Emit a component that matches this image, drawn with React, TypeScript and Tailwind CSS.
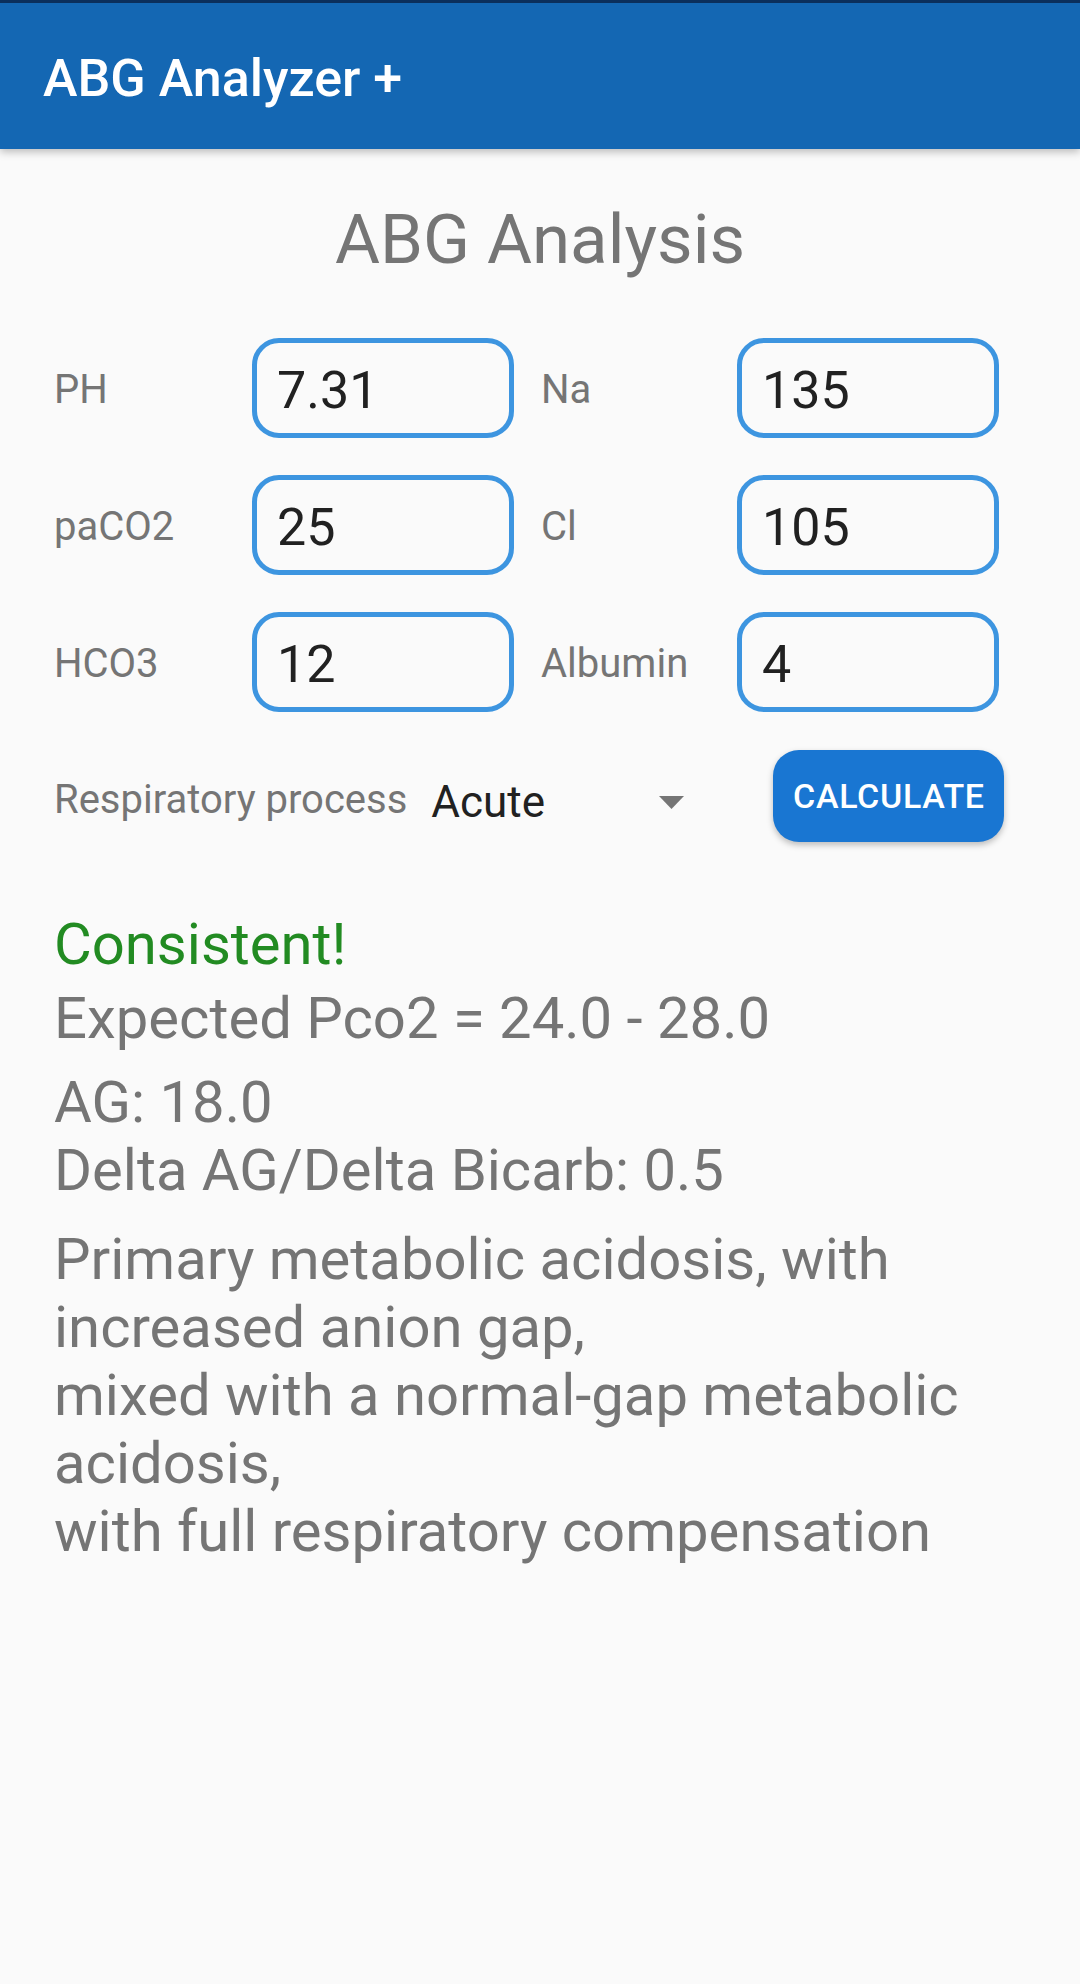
import { useState } from 'react'

const rows: [string, string, string, string][] = [
  ['PH', '7.31', 'Na', '135'],
  ['paCO2', '25', 'Cl', '105'],
  ['HCO3', '12', 'Albumin', '4'],
]

function Field({ value }: { value: string }) {
  const [val, setVal] = useState(value)
  return (
    <input
      value={val}
      onChange={(e) => setVal(e.target.value)}
      className="h-[100px] w-full rounded-[27px] border-[5px] border-[#3d95e0] bg-transparent pl-[20px] pt-[4px] text-[52px] text-[#212121] outline-none"
    />
  )
}

export default function App() {
  return (
    <div className="min-h-[1984px] w-[1080px] bg-[#fafafa] font-['Roboto','Liberation_Sans',sans-serif]">
      <header className="relative z-10 flex h-[149px] items-center border-t-[3px] border-[#0b2f5c] bg-[#1467b3] pl-[43px] pt-[6px] shadow-[0_3px_8px_rgba(0,0,0,0.25)]">
        <h1 className="text-[52px] font-medium text-white">ABG Analyzer +</h1>
      </header>

      <main className="px-[54px]">
        <h2 className="mt-[51px] text-center text-[69px] leading-[80px] text-[#757575]">ABG Analysis</h2>

        <div className="mt-[58px] flex flex-col gap-[37px]">
          {rows.map(([l1, v1, l2, v2]) => (
            <div key={l1} className="flex items-center">
              <span className="w-[198px] pt-[4px] text-[40px] text-[#757575]">{l1}</span>
              <div className="w-[262px]">
                <Field value={v1} />
              </div>
              <span className="ml-[27px] w-[196px] pt-[4px] text-[40px] text-[#757575]">{l2}</span>
              <div className="w-[262px]">
                <Field value={v2} />
              </div>
            </div>
          ))}
        </div>

        <div className="mt-[38px] flex h-[92px] items-center">
          <span className="pt-[8px] text-[40px] text-[#757575]">Respiratory process</span>
          <button type="button" className="ml-[24px] flex w-[253px] items-center pt-[12px] text-left">
            <span className="text-[44px] text-[#212121]">Acute</span>
            <svg width="25" height="13" viewBox="0 0 25 13" className="ml-auto">
              <path d="M0 0 H25 L12.5 13 Z" fill="#757575" />
            </svg>
          </button>
          <button
            type="button"
            className="ml-[89px] h-[92px] w-[231px] rounded-[26px] bg-[#1976d2] text-[34px] font-medium tracking-[0.02em] text-white shadow-[0_3px_6px_rgba(0,0,0,0.25)]"
          >
            CALCULATE
          </button>
        </div>

        <div className="mt-[68px] text-[58px] leading-[68px] text-[#757575]">
          <p className="text-[#228b22]">Consistent!</p>
          <p className="mt-[6px]">Expected Pco2 = 24.0 - 28.0</p>
          <p className="mt-[16px]">AG: 18.0</p>
          <p>Delta AG/Delta Bicarb: 0.5</p>
          <p className="mt-[21px]">
            Primary metabolic acidosis, with
            <br />
            increased anion gap,
            <br />
            mixed with a normal-gap metabolic
            <br />
            acidosis,
            <br />
            with full respiratory compensation
          </p>
        </div>
      </main>
    </div>
  )
}
